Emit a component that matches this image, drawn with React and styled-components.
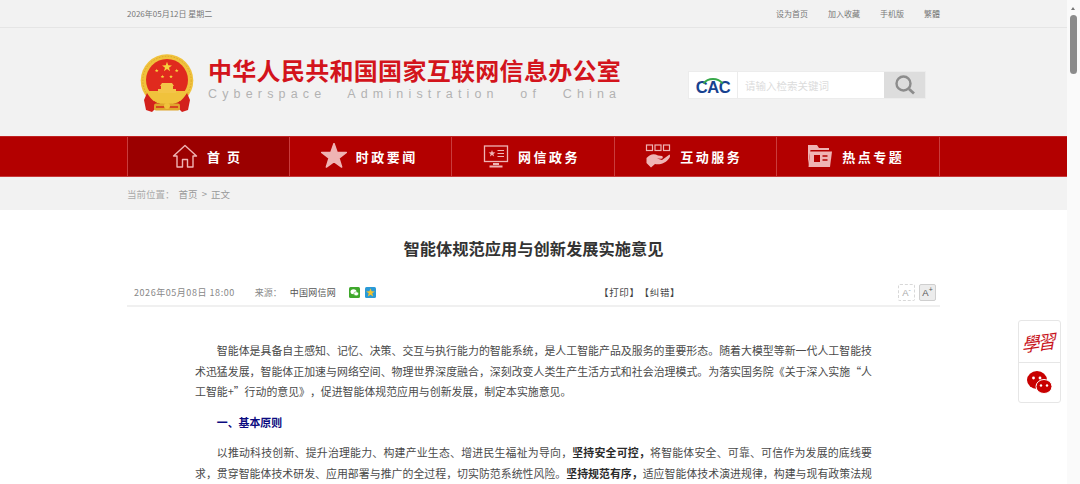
import React from 'react';
import styled, { createGlobalStyle } from 'styled-components';

const GlobalStyle = createGlobalStyle`
  html, body {
    margin: 0;
    padding: 0;
    height: 484px;
    overflow: hidden;
    background: #fff;
    font-family: "Noto Sans CJK SC", "Liberation Sans", sans-serif;
    text-spacing-trim: space-all;
  }
  * { box-sizing: border-box; }
`;

const Viewport = styled.div`
  position: relative;
  display: flex;
  width: 1080px;
  height: 484px;
  overflow: hidden;
`;

const Page = styled.div`
  width: 1067px;
  flex: none;
`;

const ScrollRail = styled.div`
  position: relative;
  width: 13px;
  flex: none;
  background: #fafafa;
`;

const ScrollArrow = styled.div`
  position: absolute;
  top: 7px;
  left: 4px;
  width: 0;
  height: 0;
  border-left: 2.5px solid transparent;
  border-right: 2.5px solid transparent;
  border-bottom: 3px solid #777;
`;

const ScrollThumb = styled.div`
  position: absolute;
  top: 15px;
  left: 3px;
  width: 7px;
  height: 59px;
  border-radius: 4px;
  background: #8b8b8b;
`;

const Wrap = styled.div`
  width: 813px;
  margin-left: 127px;
`;

const TopBar = styled.div`
  height: 28px;
  background: #f2f2f2;
  border-bottom: 1px solid #e5e5e5;
`;

const TopInner = styled(Wrap)`
  display: flex;
  justify-content: space-between;
  align-items: center;
  height: 27px;
  font-size: 8px;
  color: #777;
`;

const TopLinks = styled.div`
  display: flex;
  gap: 20px;
`;

const Masthead = styled.div`
  height: 108px;
  background: #f2f2f2;
`;

const MastInner = styled(Wrap)`
  display: flex;
  align-items: center;
  height: 108px;
  padding: 0 14px 0 13px;
`;

const Emblem = styled.svg`
  width: 54px;
  height: 58px;
  flex: none;
  margin-top: 1px;
`;

const Brand = styled.div`
  margin-left: 14px;
  margin-bottom: 9px;
  width: 420px;
  flex: none;
`;

const BrandName = styled.div`
  font-size: 24px;
  line-height: 32px;
  font-weight: 700;
  letter-spacing: 0.3px;
  color: #d3141c;
  white-space: nowrap;
`;

const BrandEn = styled.div`
  font-family: "Liberation Sans", sans-serif;
  font-size: 12.5px;
  line-height: 16px;
  letter-spacing: 5.16px;
  word-spacing: 13px;
  color: #b2b2b2;
  white-space: nowrap;
`;

const SearchBox = styled.div`
  display: flex;
  width: 238px;
  height: 28px;
  margin-left: auto;
  margin-top: 6px;
  border: 1px solid #ececec;
  background: #fff;
`;

const CacCell = styled.div`
  position: relative;
  width: 49px;
  flex: none;
  padding-bottom: 2px;
  border-right: 1px solid #ececec;
  display: flex;
  align-items: flex-end;
  justify-content: center;
`;

const CacText = styled.span`
  font-family: "Liberation Sans", sans-serif;
  font-weight: 700;
  font-size: 16.5px;
  line-height: 17px;
  letter-spacing: -0.4px;
  color: #17428f;
`;

const CacArc = styled.svg`
  position: absolute;
  top: 5px;
  left: 13px;
  width: 22px;
  height: 7px;
`;

const SearchHint = styled.div`
  flex: 1;
  padding-left: 7px;
  font-size: 10.5px;
  line-height: 27px;
  color: #dcdcdc;
`;

const SearchButton = styled.div`
  width: 41px;
  flex: none;
  background: #dddddd;
  display: flex;
  align-items: center;
  justify-content: center;
`;

const Nav = styled.div`
  height: 41px;
  background: #b30000;
  border-top: 1px solid #c02222;
  border-bottom: 1px solid #c83a3a;
`;

const NavInner = styled(Wrap)`
  display: grid;
  grid-template-columns: repeat(5, 162.2px);
  height: 39px;
  border-right: 1px solid #c93c3c;
`;

const NavItem = styled.div`
  display: flex;
  align-items: center;
  justify-content: center;
  gap: 9px;
  padding-right: ${props => (props.$active ? '3px' : '3px')};
  padding-bottom: 1px;
  border-left: 1px solid #c93c3c;
  background: ${props => (props.$active ? '#9b0000' : 'transparent')};
  color: #fff;
  font-size: 13px;
  font-weight: 700;
  letter-spacing: ${props => (props.$active ? '2px' : '2.5px')};
  white-space: pre;
`;

const NavIcon = styled.svg`
  width: 26px;
  height: 26px;
  flex: none;
`;

const Crumbs = styled.div`
  height: 33px;
  background: #f2f2f2;
`;

const CrumbInner = styled(Wrap)`
  display: flex;
  align-items: center;
  height: 33px;
  font-size: 9.5px;
  color: #aaa;
`;

const CrumbTrail = styled.span`
  margin-left: 4px;
  word-spacing: 2px;
  color: #999;
`;

const Title = styled.h1`
  margin: 0;
  padding-top: 26px;
  font-size: 16.25px;
  line-height: 24px;
  font-weight: 700;
  color: #333;
  text-align: center;
`;

const Meta = styled.div`
  display: grid;
  grid-template-columns: 465px auto 1fr;
  align-items: center;
  height: 25px;
  margin-top: 22px;
  padding: 0 4px 3px 7px;
  border-bottom: 2px solid #f0f0f0;
  font-size: 9px;
  color: #888;
`;

const MetaLeft = styled.div`
  display: flex;
  align-items: center;
`;

const MetaTime = styled.span`
  letter-spacing: 0.55px;
`;

const MetaSource = styled.span`
  margin-left: 20px;
`;

const MetaOrigin = styled.span`
  margin-left: 8px;
  letter-spacing: 0.2px;
  color: #555;
`;

const ShareIcons = styled.div`
  display: flex;
  gap: 5px;
  margin-left: 13px;
`;

const ShareIcon = styled.svg`
  width: 11px;
  height: 11px;
`;

const PrintLinks = styled.div`
  font-size: 9.5px;
  color: #444;
  letter-spacing: 0.65px;
`;

const FontTools = styled.div`
  display: flex;
  justify-content: flex-end;
  gap: 4px;
`;

const FontTool = styled.div`
  width: 17px;
  height: 17px;
  border: 1px ${props => (props.$on ? 'solid #cfcfcf' : 'dashed #d8d8d8')};
  border-radius: 2px;
  background: ${props => (props.$on ? '#ececec' : '#fff')};
  color: ${props => (props.$on ? '#555' : '#aaa')};
  font-family: "Liberation Sans", sans-serif;
  font-size: 9.5px;
  line-height: 16px;
  text-align: center;
  white-space: nowrap;
`;

const FontSign = styled.sup`
  font-size: 7px;
  line-height: 0;
`;

const Article = styled.div`
  width: 677px;
  margin: 33px 0 0 68px;
  font-size: 10.9px;
  line-height: 20.5px;
  color: #4a4a4a;
`;

const Para = styled.p`
  margin: 0 0 10px;
  text-indent: 2em;
  text-align: justify;
  text-align-last: ${props => (props.$cut ? 'justify' : 'auto')};
`;

const SectionHead = styled(Para)`
  color: #0b0b80;
  font-weight: 700;
`;

const Strong = styled.strong`
  font-weight: 700;
  color: #2b2b2b;
`;

const SideDock = styled.div`
  position: absolute;
  left: 1018px;
  top: 320px;
  width: 43px;
  height: 83px;
  background: #fff;
  border: 1px solid #e6e6e6;
  border-radius: 3px;
`;

const DockCell = styled.div`
  display: flex;
  align-items: center;
  justify-content: center;
  height: 40.5px;
  border-top: ${props => (props.$split ? '1px solid #e6e6e6' : 'none')};
`;

const XuexiMark = styled.span`
  font-family: "Noto Sans CJK TC", "Noto Sans CJK SC", sans-serif;
  font-size: 17px;
  font-weight: 400;
  letter-spacing: -1.5px;
  color: #c8141c;
  white-space: nowrap;
  transform: skewX(-18deg) rotate(-8deg) scaleY(1.15);
`;

const WechatMark = styled.svg`
  width: 25px;
  height: 23px;
`;

const starPoints = (cx, cy, r) => {
  const pts = [];
  for (let i = 0; i < 10; i++) {
    const rad = i % 2 === 0 ? r : r * 0.4;
    const a = -Math.PI / 2 + (i * Math.PI) / 5;
    pts.push(`${(cx + rad * Math.cos(a)).toFixed(2)},${(cy + rad * Math.sin(a)).toFixed(2)}`);
  }
  return pts.join(' ');
};

function EmblemMark() {
  return (
    <Emblem viewBox="0 0 54 58">
      <circle cx="27" cy="26.5" r="26.3" fill="#f0c23c" />
      <circle cx="27" cy="26.5" r="24.2" fill="none" stroke="#dca52c" strokeWidth="1" strokeDasharray="1.5 1.5" />
      <circle cx="27" cy="26" r="21" fill="#e02a1e" />
      <path d="M8 37 H46 L42 47 H12 Z" fill="#f0c23c" />
      <polygon points={starPoints(27, 13, 5.2)} fill="#f6d23e" />
      <polygon points={starPoints(16.7, 16.7, 2)} fill="#f6d23e" />
      <polygon points={starPoints(36.7, 16.7, 2)} fill="#f6d23e" />
      <polygon points={starPoints(22.5, 22.7, 2)} fill="#f6d23e" />
      <polygon points={starPoints(31, 22.7, 2)} fill="#f6d23e" />
      <path d="M22 29 H32 L34 32 H20 Z M21 32 H33 V35 H21 Z M18 35 H36 V39 H18 Z" fill="#f3c548" />
      <path d="M7 39 C12 47 16 49 20 50 L12 58 L6 56 L4 46 Z M47 39 C42 47 38 49 34 50 L42 58 L48 56 L50 46 Z" fill="#d3201c" />
      <path d="M14 47 C20 52 34 52 40 47 L41 52 C36 56 18 56 13 52 Z" fill="#d3201c" />
      <rect x="14" y="49.5" width="26" height="7" rx="2" fill="#e0a52c" />
      <path d="M16 53 H38" stroke="#d3201c" strokeWidth="1.4" />
      <circle cx="27" cy="52" r="3" fill="#f0c23c" />
    </Emblem>
  );
}

const navIconColor = '#efb4b4';

const HomeIcon = () => (
  <NavIcon viewBox="0 0 26 26" fill="none" stroke={navIconColor} strokeWidth="1.4" strokeLinejoin="round">
    <path d="M1.5 13 L13 2.5 L24.5 13 L21 13 V24 H15.5 V16.5 H10.5 V24 H5 V13 Z" />
  </NavIcon>
);

const StarIcon = () => (
  <NavIcon viewBox="0 0 26 26">
    <polygon points={starPoints(13, 13.5, 13)} fill={navIconColor} stroke={navIconColor} strokeWidth="1.5" strokeLinejoin="round" />
  </NavIcon>
);

const ScreenIcon = () => (
  <NavIcon viewBox="0 0 26 26" fill="none" stroke={navIconColor}>
    <rect x="1.5" y="3" width="23" height="15.5" strokeWidth="1.3" />
    <polygon points={starPoints(9, 10.5, 3.6)} fill={navIconColor} stroke="none" />
    <path d="M14.5 7.5 H21 M14.5 10.5 H21 M14.5 13.5 H21" strokeWidth="1.2" />
    <path d="M10 21 H16 M6.5 23.5 H19.5" strokeWidth="2" />
  </NavIcon>
);

const HandIcon = () => (
  <NavIcon viewBox="0 0 26 26" fill={navIconColor}>
    <g fill="none" stroke={navIconColor} strokeWidth="1.2">
      <rect x="1.5" y="2" width="6" height="5.5" />
      <rect x="10" y="2" width="6" height="5.5" />
      <rect x="18.5" y="2" width="6" height="5.5" />
    </g>
    <path d="M1.5 15 C5 11 9 10 13 12.5 L17 13 C18.5 13.5 18 16 16 15.8 L12 15.6 L17 17 L24.5 11.5 C25.5 12.5 25 14 24 15.5 C21 20 15 22 10 21 L6 24.5 L1.5 20 Z" />
  </NavIcon>
);

const FolderIcon = () => (
  <NavIcon viewBox="0 0 26 26">
    <path d="M1 2 H10 L12 5 H22 V7 H3.5 L1 22 Z" fill={navIconColor} />
    <path d="M3 8.5 H25 L23 24 H1.5 Z" fill={navIconColor} />
    <rect x="7" y="12" width="6" height="7" fill="#b30000" />
    <path d="M15.5 13 H20.5 M15.5 17 H20.5" stroke="#b30000" strokeWidth="1.6" />
  </NavIcon>
);

const navItems = [
  { label: '首 页', icon: <HomeIcon />, active: true },
  { label: '时政要闻', icon: <StarIcon /> },
  { label: '网信政务', icon: <ScreenIcon /> },
  { label: '互动服务', icon: <HandIcon /> },
  { label: '热点专题', icon: <FolderIcon /> },
];

export default function App() {
  return (
    <Viewport>
      <GlobalStyle />
      <Page>
        <TopBar>
          <TopInner>
            <span>2026年05月12日 星期二</span>
            <TopLinks>
              <span>设为首页</span>
              <span>加入收藏</span>
              <span>手机版</span>
              <span>繁體</span>
            </TopLinks>
          </TopInner>
        </TopBar>

        <Masthead>
          <MastInner>
            <EmblemMark />
            <Brand>
              <BrandName>中华人民共和国国家互联网信息办公室</BrandName>
              <BrandEn>Cyberspace Administration of China</BrandEn>
            </Brand>
            <SearchBox>
              <CacCell>
                <CacArc viewBox="0 0 22 7" fill="none">
                  <path d="M1.5 6.5 C6 0.5 16 0.5 20.5 6.5" stroke="#37a84a" strokeWidth="1.8" />
                </CacArc>
                <CacText>CAC</CacText>
              </CacCell>
              <SearchHint>请输入检索关键词</SearchHint>
              <SearchButton>
                <svg width="22" height="22" viewBox="0 0 22 22" fill="none" stroke="#8c8c8c">
                  <circle cx="9.5" cy="9.5" r="7" strokeWidth="2.4" />
                  <path d="M15 15 L20 19.5" strokeWidth="2.8" />
                </svg>
              </SearchButton>
            </SearchBox>
          </MastInner>
        </Masthead>

        <Nav>
          <NavInner>
            {navItems.map(item => (
              <NavItem key={item.label} $active={item.active}>
                {item.icon}
                {item.label}
              </NavItem>
            ))}
          </NavInner>
        </Nav>

        <Crumbs>
          <CrumbInner>
            当前位置：<CrumbTrail>首页 &gt; 正文</CrumbTrail>
          </CrumbInner>
        </Crumbs>

        <Wrap>
          <Title>智能体规范应用与创新发展实施意见</Title>
          <Meta>
            <MetaLeft>
              <MetaTime>2026年05月08日 18:00</MetaTime>
              <MetaSource>来源：</MetaSource>
              <MetaOrigin>中国网信网</MetaOrigin>
              <ShareIcons>
                <ShareIcon viewBox="0 0 11 11">
                  <rect width="11" height="11" rx="1.5" fill="#3fa82c" />
                  <ellipse cx="4.5" cy="4.8" rx="3" ry="2.5" fill="#fff" />
                  <ellipse cx="7.2" cy="6.8" rx="2.4" ry="2" fill="#fff" stroke="#3fa82c" strokeWidth="0.5" />
                </ShareIcon>
                <ShareIcon viewBox="0 0 11 11">
                  <rect width="11" height="11" rx="1.5" fill="#2a9ad6" />
                  <polygon points={starPoints(5.5, 5.8, 4.6)} fill="#f4c22e" />
                </ShareIcon>
              </ShareIcons>
            </MetaLeft>
            <PrintLinks>【打印】【纠错】</PrintLinks>
            <FontTools>
              <FontTool>A<FontSign>-</FontSign></FontTool>
              <FontTool $on>A<FontSign>+</FontSign></FontTool>
            </FontTools>
          </Meta>

          <Article>
            <Para>智能体是具备自主感知、记忆、决策、交互与执行能力的智能系统，是人工智能产品及服务的重要形态。随着大模型等新一代人工智能技术迅猛发展，智能体正加速与网络空间、物理世界深度融合，深刻改变人类生产生活方式和社会治理模式。为落实国务院《关于深入实施“人工智能+”行动的意见》，促进智能体规范应用与创新发展，制定本实施意见。</Para>
            <SectionHead>一、基本原则</SectionHead>
            <Para $cut>以推动科技创新、提升治理能力、构建产业生态、增进民生福祉为导向，<Strong>坚持安全可控，</Strong>将智能体安全、可靠、可信作为发展的底线要求，贯穿智能体技术研发、应用部署与推广的全过程，切实防范系统性风险。<Strong>坚持规范有序，</Strong>适应智能体技术演进规律，构建与现有政策法规</Para>
          </Article>
        </Wrap>
      </Page>

      <ScrollRail>
        <ScrollArrow />
        <ScrollThumb />
      </ScrollRail>

      <SideDock>
        <DockCell>
          <XuexiMark>學習</XuexiMark>
        </DockCell>
        <DockCell $split>
          <WechatMark viewBox="0 0 25 23">
            <ellipse cx="10" cy="9" rx="10" ry="9" fill="#c80000" />
            <circle cx="6.5" cy="7" r="1.4" fill="#fff" />
            <circle cx="13" cy="7" r="1.4" fill="#fff" />
            <ellipse cx="17" cy="15.5" rx="8" ry="7" fill="#c80000" stroke="#fff" strokeWidth="1" />
            <circle cx="14" cy="14.5" r="1.2" fill="#fff" />
            <circle cx="20" cy="14.5" r="1.2" fill="#fff" />
          </WechatMark>
        </DockCell>
      </SideDock>
    </Viewport>
  );
}
